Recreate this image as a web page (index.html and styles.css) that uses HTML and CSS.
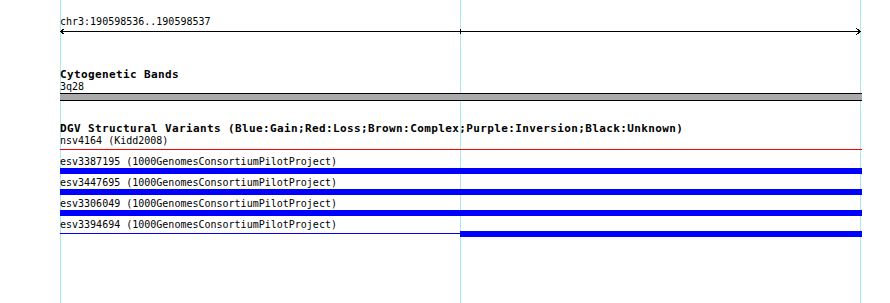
FILE: index.html
```html
<!DOCTYPE html>
<html lang="en">
<head>
  <meta charset="UTF-8">
  <title>chr3:190598536..190598537</title>
  <link rel="stylesheet" href="styles.css">
</head>
<body>
  <!-- Browser panel with grid lines drawn as background -->
  <div class="panel">
    <div class="tracks">

      <!-- Ruler -->
      <div class="ruler">
        <div class="label">chr3:190598536..190598537</div>
        <svg class="ruler-line" width="801" height="7" viewBox="0 0 801 7">
          <path d="M0.5 3.5H800.5M4.5 0.5L0.5 3.5L4.5 6.5M796.5 0.5L800.5 3.5L796.5 6.5M400.5 1V6" fill="none" stroke="#000" stroke-width="1" shape-rendering="crispEdges"/>
        </svg>
      </div>

      <!-- Cytogenetic bands track -->
      <section class="track cyto">
        <h2 class="track-title">Cytogenetic Bands</h2>
        <div class="label">3q28</div>
        <div class="band"></div>
      </section>

      <!-- DGV track -->
      <section class="track dgv">
        <h2 class="track-title">DGV Structural Variants (Blue:Gain;Red:Loss;Brown:Complex;Purple:Inversion;Black:Unknown)</h2>

        <div class="feature">
          <div class="label">nsv4164 (Kidd2008)</div>
          <div class="glyph"><div class="line loss"></div></div>
        </div>

        <div class="feature">
          <div class="label">esv3387195 (1000GenomesConsortiumPilotProject)</div>
          <div class="glyph"><div class="bar gain"></div></div>
        </div>

        <div class="feature">
          <div class="label">esv3447695 (1000GenomesConsortiumPilotProject)</div>
          <div class="glyph"><div class="bar gain"></div></div>
        </div>

        <div class="feature">
          <div class="label">esv3306049 (1000GenomesConsortiumPilotProject)</div>
          <div class="glyph"><div class="bar gain"></div></div>
        </div>

        <div class="feature">
          <div class="label">esv3394694 (1000GenomesConsortiumPilotProject)</div>
          <div class="glyph split">
            <div class="half"><div class="line gain"></div></div>
            <div class="half"><div class="bar gain"></div></div>
          </div>
        </div>
      </section>

    </div>
  </div>
</body>
</html>
```

FILE: styles.css
```css
/* Page */
body {
  margin: 0;
  background: #fff;
  font-family: 'DejaVu Sans Mono', monospace;
  color: #000;
}

/* Panel with three light cyan grid lines */
.panel {
  width: 890px;
  height: 303px;
  overflow: hidden;
  background:
    linear-gradient(#a8eaee, #a8eaee) 60px 0 / 1px 100% no-repeat,
    linear-gradient(#a8eaee, #a8eaee) 460px 0 / 1px 100% no-repeat,
    linear-gradient(#a8eaee, #a8eaee) 860px 0 / 1px 100% no-repeat,
    #fff;
}

.tracks {
  margin-left: 60px;
  width: 802px;
  padding-top: 16px;
}

.label {
  font-size: 10px;
  line-height: 12px;
  height: 12px;
  white-space: nowrap;
  -webkit-font-smoothing: none;
}

/* Ruler */
.ruler-line {
  display: block;
}

/* Tracks */
.track-title {
  margin: 0;
  font-size: 11px;
  font-weight: bold;
  line-height: 12px;
  height: 12px;
  letter-spacing: 0.38px;
  white-space: nowrap;
}

.cyto {
  margin-top: 34px;
}

.band {
  height: 6px;
  background: #aaaaaa;
  border-top: 1px solid #000;
  border-bottom: 1px solid #000;
}

.dgv {
  margin-top: 22px;
}

.feature {
  margin-bottom: 3px;
}

.glyph {
  display: flow-root;
  height: 6px;
}

.glyph.split {
  display: flex;
}

.half {
  width: 400px;
}

.half + .half {
  flex: 1;
}

.bar {
  height: 6px;
}

.line {
  height: 1px;
  margin-top: 2px;
}

.bar.gain {
  background: #0000ff;
}

.line.gain {
  background: #0000ff;
}

.line.loss {
  background: #ff0000;
}
```
